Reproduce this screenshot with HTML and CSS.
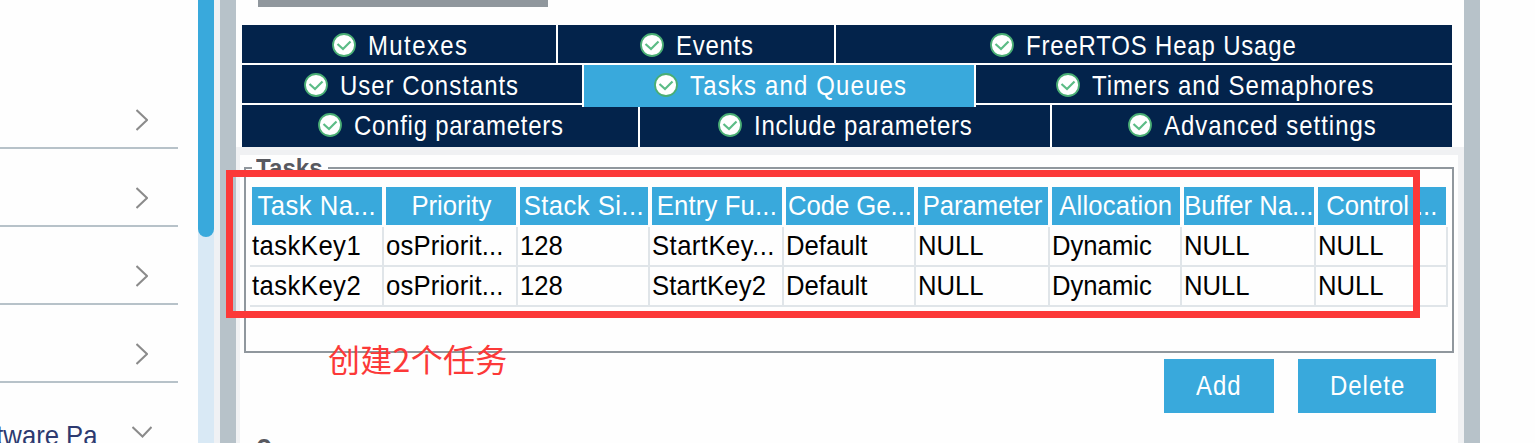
FILE: index.html
```html
<!DOCTYPE html>
<html lang="en">
<head>
<meta charset="utf-8">
<title>FreeRTOS configuration</title>
<link rel="stylesheet" href="styles.css">
</head>
<body>
<svg width="0" height="0" class="defs">
  <symbol id="ok" viewBox="0 0 24 24">
    <circle cx="12" cy="12" r="11" fill="#fff" stroke="#4aae74" stroke-width="1.8"/>
    <path d="M5.5 11 L11 16 L18.5 8.5" fill="none" stroke="#5cbc86" stroke-width="2.2"/>
  </symbol>
  <symbol id="right" viewBox="0 0 12 22">
    <path d="M0.5 1 L11 11 L0.5 21" fill="none" stroke="#8b8b8b" stroke-width="2"/>
  </symbol>
  <symbol id="down" viewBox="0 0 20 12">
    <path d="M0.5 1 L10.5 10.5 L19.5 1" fill="none" stroke="#8b8b8b" stroke-width="2"/>
  </symbol>
</svg>
<div class="app">
  <nav class="sidebar">
    <div class="category"><svg class="right"><use href="#right"/></svg></div>
    <div class="category"><svg class="right"><use href="#right"/></svg></div>
    <div class="category"><svg class="right"><use href="#right"/></svg></div>
    <div class="category"><svg class="right"><use href="#right"/></svg></div>
    <div class="category last"><div class="name"><span>tware Pa</span></div><svg class="down"><use href="#down"/></svg></div>
  </nav>
  <div class="scrollbar"><div class="thumb"></div></div>
  <div class="gutter"></div>
  <div class="divider"></div>
  <main class="main">
    <div class="strip"></div>
    <div class="tabs">
      <div class="tabrow">
        <div class="tab mutexes"><svg><use href="#ok"/></svg><span>Mutexes</span></div>
        <div class="tab events"><svg><use href="#ok"/></svg><span>Events</span></div>
        <div class="tab heap"><svg><use href="#ok"/></svg><span>FreeRTOS Heap Usage</span></div>
      </div>
      <div class="tabrow">
        <div class="tab constants"><svg><use href="#ok"/></svg><span>User Constants</span></div>
        <div class="tab tasks active"><svg><use href="#ok"/></svg><span>Tasks and Queues</span></div>
        <div class="tab timers"><svg><use href="#ok"/></svg><span>Timers and Semaphores</span></div>
      </div>
      <div class="tabrow bottom">
        <div class="tab config"><svg><use href="#ok"/></svg><span>Config parameters</span></div>
        <div class="tab include"><svg><use href="#ok"/></svg><span>Include parameters</span></div>
        <div class="tab advanced"><svg><use href="#ok"/></svg><span>Advanced settings</span></div>
      </div>
    </div>
    <div class="panel">
      <div class="content">
        <section class="group">
          <div class="legend"><span>Tasks</span></div>
          <div class="table">
            <div class="row head"><div><span class="loose">Task Na...</span></div><div><span>Priority</span></div><div><span class="loose">Stack Si...</span></div><div><span class="open">Entry Fu...</span></div><div><span>Code Ge...</span></div><div><span>Parameter</span></div><div><span class="open">Allocation</span></div><div><span>Buffer Na...</span></div><div><span>Control ...</span></div></div>
            <div class="row"><div><span class="loose">taskKey1</span></div><div><span class="open">osPriorit...</span></div><div><span>128</span></div><div><span class="loose">StartKey...</span></div><div><span>Default</span></div><div><span>NULL</span></div><div><span>Dynamic</span></div><div><span>NULL</span></div><div><span>NULL</span></div></div>
            <div class="row"><div><span class="loose">taskKey2</span></div><div><span class="open">osPriorit...</span></div><div><span>128</span></div><div><span class="open">StartKey2</span></div><div><span>Default</span></div><div><span>NULL</span></div><div><span>Dynamic</span></div><div><span>NULL</span></div><div><span>NULL</span></div></div>
          </div>
        </section>
        <div class="actions">
          <div class="button add"><span>Add</span></div>
          <div class="button delete"><span>Delete</span></div>
        </div>
        <div class="next"><span>Q</span></div>
      </div>
    </div>
  </main>
  <div class="divider"></div>
  <div class="marker"></div>
  <div class="note">创建2个任务</div>
</div>
</body>
</html>
```
FILE: styles.css
```css
* { box-sizing: border-box; }
body { margin: 0; background: #fefefe; font-family: "Liberation Sans", Arial, sans-serif; font-size: 28.5px; }
.defs { position: absolute; }
.app { position: relative; display: flex; width: 1535px; height: 443px; overflow: hidden; }
span { display: inline-block; white-space: nowrap; transform: scaleX(.9); transform-origin: left center; }

.sidebar { width: 198px; padding: 71px 20px 0 0; }
.category { height: 78px; border-bottom: 2px solid #b7c2c9; display: flex; justify-content: flex-end; align-items: flex-start; padding: 38px 30px 0 0; }
.right { width: 12px; height: 22px; }
.last { border: 0; padding: 43px 26px 0 0; }
.name { flex: 1; min-width: 0; margin-right: 35px; display: flex; justify-content: flex-end; line-height: 32px; color: #2d3a70; margin-top: -7px; }
.name span { transform-origin: right center; }
.down { width: 20px; height: 12px; flex: none; }
.scrollbar { width: 16px; background: #d9e9f5; }
.thumb { height: 237px; background: #39a9dc; border-radius: 0 0 8px 8px; }
.gutter { width: 6px; background: #eff1f4; }
.divider { width: 16px; background: #b7c2c9; }

.main { width: 1228px; }
.strip { width: 290px; height: 7px; margin: 0 0 18px 22px; background: #90979d; }
.tabs { margin: 0 12px 0 6px; background: #fff; height: 122px; }
.tabrow { display: flex; gap: 2px; height: 40px; background: #fff; }
.tab { height: 38px; background: #03234b; color: #fff; display: flex; gap: 12px; padding-top: 8px; }
.bottom, .bottom .tab { height: 42px; }
.tab svg { width: 24px; height: 24px; flex: none; }
.tab span, .button span { font-size: 28.5px; line-height: 32px; margin-top: -4px; transform: scaleX(.84); letter-spacing: 1.2px; }
.active { position: relative; height: 42px; background: #39a9dc; box-shadow: -2px 0 #fff, 2px 0 #fff; }
.mutexes { width: 314px; padding-left: 90px; }
.tab.mutexes span { letter-spacing: 1.7px; }
.events { width: 276px; padding-left: 82px; }
.tab.events span { letter-spacing: .9px; }
.heap { width: 616px; padding-left: 154px; }
.tab.heap span { letter-spacing: 1px; }
.constants { width: 340px; padding-left: 62px; }
.tasks { width: 390px; padding-left: 70px; }
.tab.tasks span { letter-spacing: 1.4px; }
.timers { width: 476px; padding-left: 80px; }
.config { width: 396px; padding-left: 76px; }
.include { width: 410px; padding-left: 78px; }
.tab.config span, .tab.include span { letter-spacing: .9px; }
.advanced { width: 400px; padding-left: 76px; }

.panel { height: 296px; padding: 8px 6px 0 4px; background: #f0f1f3; }
.content { height: 288px; background: #fefefe; padding: 12px 4px 0; }
.group { height: 186px; border: 2px solid #90979d; padding: 0 4px; }
.legend { width: 76px; height: 18px; margin: -12px 0 0 2px; padding-left: 4px; background: #fefefe; font-weight: 700; font-size: 26px; line-height: 22px; color: #58595f; }
.legend span { transform: scaleX(.93); }
.table { width: 1198px; margin-top: 12px; }
.row { display: grid; grid-template-columns: 134px 134px 132px 134px 132px 134px 132px 134px 132px; height: 40px; line-height: 36px; color: #000; }
.row > div { border: solid #e0e5e9; border-width: 0 2px 2px 0; padding-left: 2px; }
.head { color: #fff; }
.row.head > div { border: 0; padding: 0; margin: 0 2px 2px; background: #39a9dc; display: flex; justify-content: center; }
.head span { transform-origin: center; }
.loose { letter-spacing: .5px; }
.open { letter-spacing: .2px; }

.actions { display: flex; gap: 24px; justify-content: flex-end; padding: 6px 18px 0 0; }
.button { height: 54px; background: #39a9dc; color: #fff; padding-top: 10px; }
.actions .button span { margin-top: 0; display: block; }
.add { width: 110px; padding-left: 32px; }
.delete { width: 138px; padding-left: 32px; }
.next { padding-left: 12px; margin-top: 20px; height: 30px; font-weight: 700; font-size: 26px; line-height: 30px; color: #58595f; }
.next span { transform: scaleX(.8); }

.marker { position: absolute; left: 226px; top: 170px; width: 1194px; height: 148px; border: 7px solid #fc3938; }
.note { position: absolute; left: 328px; top: 335px; font: 32px/46px "Noto Sans CJK SC", sans-serif; letter-spacing: .3px; color: #fc3938; white-space: nowrap; }
```
